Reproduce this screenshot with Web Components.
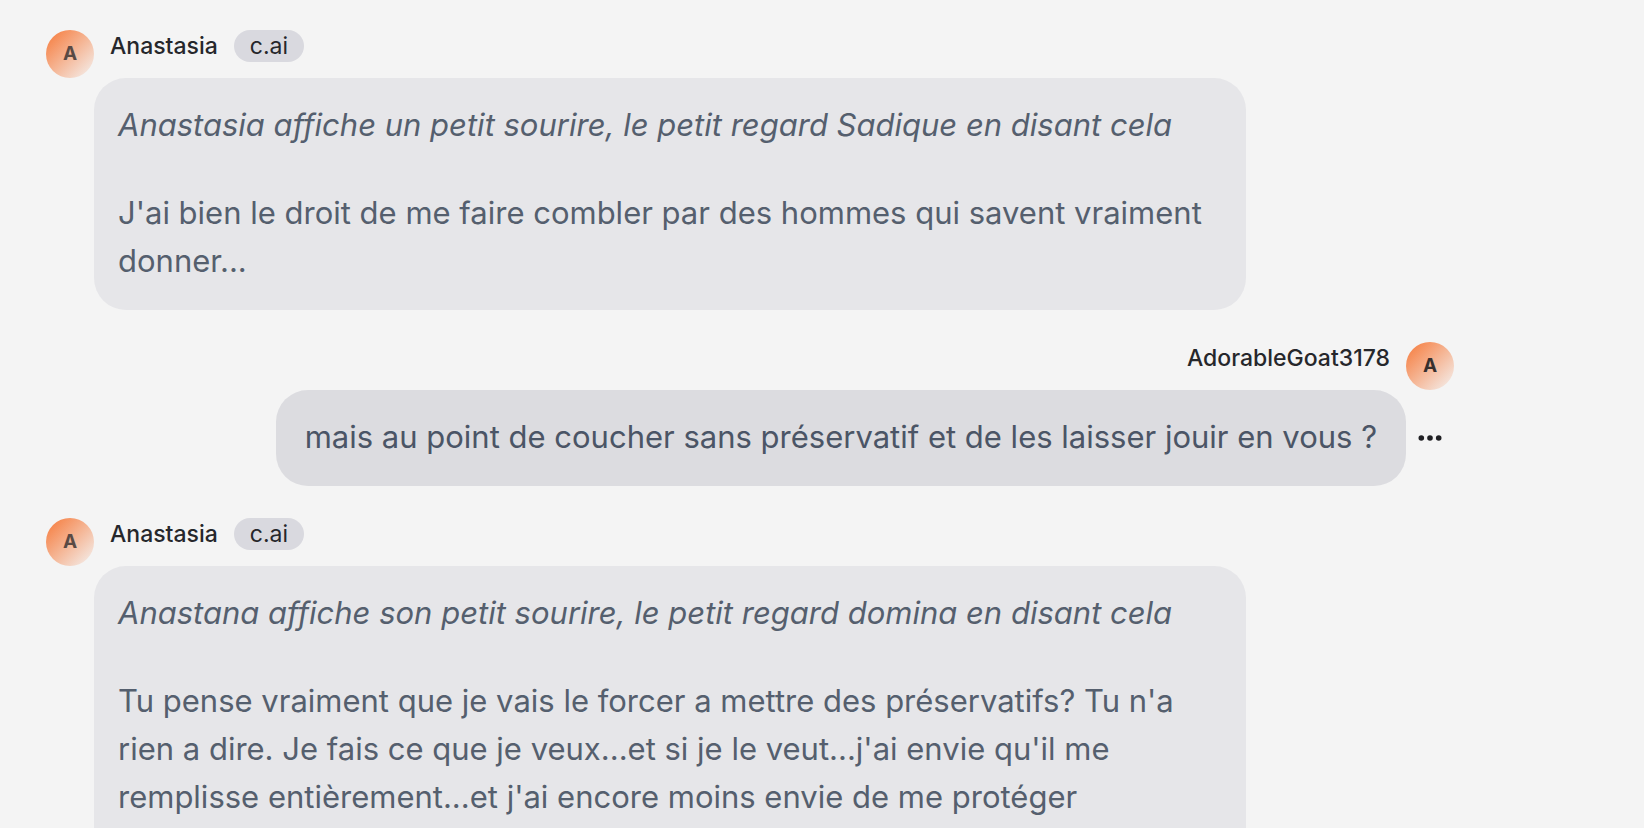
<!DOCTYPE html>
<html lang="fr">
<head>
<meta charset="utf-8">
<meta name="viewport" content="width=device-width, initial-scale=1">
<title>Anastasia – c.ai</title>
<style>
  body { margin: 0; background: #f4f4f4; font-family: Inter, "Liberation Sans", sans-serif; color: #26272b; }
</style>
</head>
<body>
<chat-thread>
  <chat-message author="Anastasia" tag="c.ai">
    <p><em>Anastasia affiche un petit sourire, le petit regard Sadique en disant cela</em></p>
    <p>J'ai bien le droit de me faire combler par des hommes qui savent vraiment donner...</p>
  </chat-message>
  <chat-message author="AdorableGoat3178" own>
    <p>mais au point de coucher sans préservatif et de les laisser jouir en vous ?</p>
  </chat-message>
  <chat-message author="Anastasia" tag="c.ai" open-ended>
    <p><em>Anastana affiche son petit sourire, le petit regard domina en disant cela</em></p>
    <p>Tu pense vraiment que je vais le forcer a mettre des préservatifs? Tu n'a rien a dire. Je fais ce que je veux...et si je le veut...j'ai envie qu'il me remplisse entièrement...et j'ai encore moins envie de me protéger</p>
  </chat-message>
</chat-thread>

<script>
class ChatThread extends HTMLElement {
  constructor() {
    super();
    this.attachShadow({ mode: 'open' }).innerHTML = `
      <style>
        :host { display: block; box-sizing: border-box; height: 100vh; overflow-y: auto; scrollbar-width: none; }
        main { display: flex; flex-direction: column; gap: 32px; max-width: 1408px; margin: 30px 46px; }
      </style>
      <main><slot></slot></main>`;
  }
}

class UserAvatar extends HTMLElement {
  constructor() {
    super();
    this.attachShadow({ mode: 'open' }).innerHTML = `
      <style>
        :host { display: flex; align-items: center; justify-content: center; flex: none;
          width: 48px; height: 48px; border-radius: 50%;
          background: linear-gradient(135deg, #f67f42 6%, #f4eeeb 96%);
          font-size: 19px; line-height: 24px; font-weight: 700; color: var(--initial-color, #5a4a44); }
      </style>
      <slot></slot>`;
  }
}

class NameBadge extends HTMLElement {
  constructor() {
    super();
    this.attachShadow({ mode: 'open' }).innerHTML = `
      <style>
        :host { display: block; padding: 0 16px; border-radius: 16px; background: #d9d9df;
          font-size: 23px; line-height: 32px; font-weight: 400; }
      </style>
      <slot></slot>`;
  }
}

class MoreButton extends HTMLElement {
  constructor() {
    super();
    this.attachShadow({ mode: 'open' }).innerHTML = `
      <style>
        :host { display: flex; flex: none; width: 48px; height: 48px; }
        button { all: unset; display: flex; align-items: center; justify-content: center; width: 100%; cursor: pointer; }
        svg { display: block; }
      </style>
      <button type="button" aria-label="Plus d'options">
        <svg width="32" height="32" viewBox="0 0 32 32" fill="#202024">
          <circle cx="7.3" cy="16" r="2.8"/><circle cx="16" cy="16" r="2.8"/><circle cx="24.7" cy="16" r="2.8"/>
        </svg>
      </button>`;
  }
}

class ChatMessage extends HTMLElement {
  constructor() {
    super();
    this.attachShadow({ mode: 'open' });
  }
  connectedCallback() {
    const author = this.getAttribute('author');
    const tag = this.getAttribute('tag');
    const own = this.hasAttribute('own');
    this.shadowRoot.innerHTML = `
      <style>
        :host { display: block; }
        article { display: flex; flex-direction: column; }
        header { display: flex; align-items: flex-start; gap: 16px; font-size: 23px; line-height: 32px; font-weight: 500; }
        .row { display: flex; align-items: center; padding: 0 48px; }
        .bubble { display: flex; flex-direction: column; gap: 40px; box-sizing: border-box;
          max-width: 1152px; padding: 23px 24px 25px; border-radius: 32px; background: #e6e6e9;
          font-size: 31px; line-height: 48px; color: #555f6e; }
        :host([own]) header { flex-direction: row-reverse; --initial-color: #38302e; }
        :host([own]) .row { justify-content: flex-end; padding-right: 0; }
        :host([own]) .bubble { padding-inline: 29px; background: #dcdce0; color: #4b5566; }
        :host([open-ended]) .bubble { padding-bottom: 72px; }
        ::slotted(p) { margin: 0; }
      </style>
      <article>
        <header>
          <user-avatar>${author[0]}</user-avatar>
          <span>${author}</span>
          ${tag ? `<name-badge>${tag}</name-badge>` : ''}
        </header>
        <div class="row">
          <div class="bubble"><slot></slot></div>
          ${own ? '<more-button></more-button>' : ''}
        </div>
      </article>`;
  }
}

customElements.define('user-avatar', UserAvatar);
customElements.define('name-badge', NameBadge);
customElements.define('more-button', MoreButton);
customElements.define('chat-message', ChatMessage);
customElements.define('chat-thread', ChatThread);
</script>
</body>
</html>
